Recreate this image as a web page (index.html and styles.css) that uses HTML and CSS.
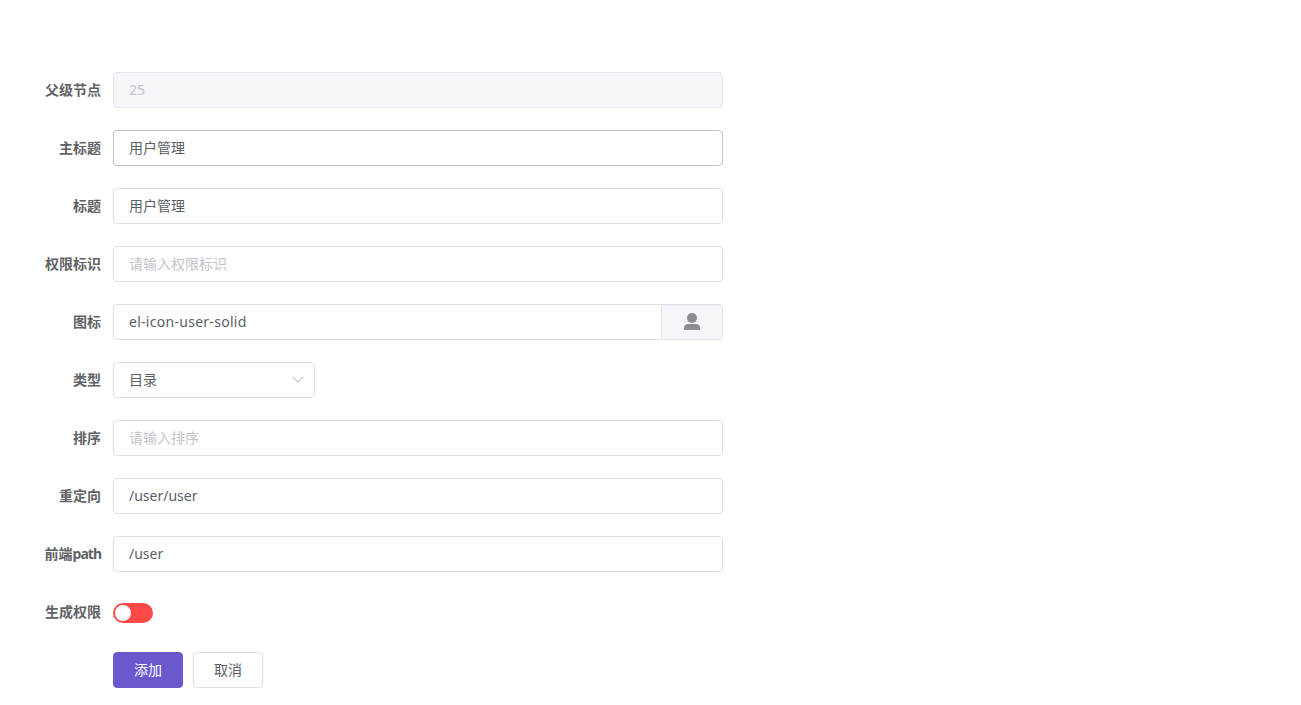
FILE: index.html
```html
<!DOCTYPE html>
<html lang="zh-CN">
<head>
    <meta charset="UTF-8">
    <meta name="viewport" content="width=device-width, initial-scale=1.0">
    <title>添加菜单</title>
    <link rel="stylesheet" href="styles.css">
</head>
<body>
    <form class="menu-form" onsubmit="return false;">
        <div class="form-item">
            <label class="form-label">父级节点</label>
            <input class="form-input" type="text" value="25" disabled>
        </div>
        <div class="form-item">
            <label class="form-label">主标题</label>
            <input class="form-input is-hover" type="text" value="用户管理">
        </div>
        <div class="form-item">
            <label class="form-label">标题</label>
            <input class="form-input" type="text" value="用户管理">
        </div>
        <div class="form-item">
            <label class="form-label">权限标识</label>
            <input class="form-input" type="text" placeholder="请输入权限标识">
        </div>
        <div class="form-item">
            <label class="form-label">图标</label>
            <div class="input-group">
                <input class="form-input icon-value" type="text" value="el-icon-user-solid">
                <div class="input-append">
                    <svg class="user-icon" width="16" height="18" viewBox="0 0 16 18">
                        <circle cx="8" cy="5" r="5"/>
                        <path d="M0 17V14.5C0 12.5 2 11 4 11H12C14 11 16 12.5 16 14.5V17Z"/>
                    </svg>
                </div>
            </div>
        </div>
        <div class="form-item">
            <label class="form-label">类型</label>
            <div class="form-select">
                <span>目录</span>
                <svg class="select-arrow" width="12" height="7" viewBox="0 0 12 7">
                    <path d="M0.8 0.8L6 6L11.2 0.8"/>
                </svg>
            </div>
        </div>
        <div class="form-item">
            <label class="form-label">排序</label>
            <input class="form-input" type="text" placeholder="请输入排序">
        </div>
        <div class="form-item">
            <label class="form-label">重定向</label>
            <input class="form-input" type="text" value="/user/user">
        </div>
        <div class="form-item">
            <label class="form-label">前端<span class="label-latin">path</span></label>
            <input class="form-input" type="text" value="/user">
        </div>
        <div class="form-item">
            <label class="form-label">生成权限</label>
            <div class="switch"><span class="switch-knob"></span></div>
        </div>
        <div class="form-item">
            <div class="form-label"></div>
            <button class="btn btn-primary" type="submit">添加</button>
            <button class="btn" type="button">取消</button>
        </div>
    </form>
</body>
</html>
```

FILE: styles.css
```css
body {
    margin: 0;
    background: #fff;
    font-family: "Noto Sans", "Noto Sans CJK SC", sans-serif;
    font-size: 14px;
    color: #5a5e66;
}

.menu-form {
    width: 723px;
    padding-top: 72px;
}

.form-item {
    display: flex;
    align-items: center;
    height: 36px;
    margin-bottom: 22px;
}

.form-label {
    flex: none;
    width: 101px;
    padding: 0 12px 3px 0;
    text-align: right;
    font-size: 14px;
    font-weight: 700;
    color: #606266;
}

.label-latin {
    letter-spacing: -1px;
}

.form-input {
    flex: 1;
    min-width: 0;
    box-sizing: border-box;
    height: 36px;
    padding: 0 15px 2px;
    border: 1px solid #dcdfe6;
    border-radius: 4px;
    outline: none;
    background: #fff;
    font: inherit;
    color: #5a5e66;
}

.form-input::placeholder {
    color: #c0c4cc;
    opacity: 1;
}

.form-input:disabled {
    background: #f5f6fa;
    border-color: #e4e7ed;
    color: #c0c4cc;
}

.form-input.is-hover {
    border-color: #c0c4cc;
}

.input-group {
    flex: 1;
    display: flex;
}

.input-group .form-input {
    border-radius: 4px 0 0 4px;
    border-right: 0;
}

.icon-value {
    letter-spacing: 0.28px;
}

.input-append {
    flex: none;
    box-sizing: border-box;
    width: 62px;
    height: 36px;
    display: flex;
    align-items: center;
    justify-content: center;
    background: #f5f6fa;
    border: 1px solid #dcdfe6;
    border-radius: 0 4px 4px 0;
}

.user-icon {
    fill: #8a8d96;
}

.form-select {
    box-sizing: border-box;
    width: 202px;
    height: 36px;
    padding: 0 10px 2px 15px;
    display: flex;
    align-items: center;
    justify-content: space-between;
    border: 1px solid #dcdfe6;
    border-radius: 4px;
    color: #5a5e66;
}

.select-arrow {
    fill: none;
    stroke: #c0c4cc;
    stroke-width: 1.2;
}

.switch {
    position: relative;
    width: 40px;
    height: 20px;
    margin-top: 2px;
    border-radius: 10px;
    background: #ff4949;
}

.switch-knob {
    position: absolute;
    top: 2px;
    left: 2px;
    width: 16px;
    height: 16px;
    border-radius: 50%;
    background: #fff;
}

.btn {
    box-sizing: border-box;
    width: 70px;
    height: 36px;
    padding: 0 0 2px;
    border: 1px solid #dcdfe6;
    border-radius: 4px;
    background: #fff;
    font: inherit;
    color: #5a5e66;
    cursor: pointer;
}

.btn + .btn {
    margin-left: 10px;
}

.btn-primary {
    background: #6959cd;
    border-color: #6959cd;
    color: #fff;
}
```
